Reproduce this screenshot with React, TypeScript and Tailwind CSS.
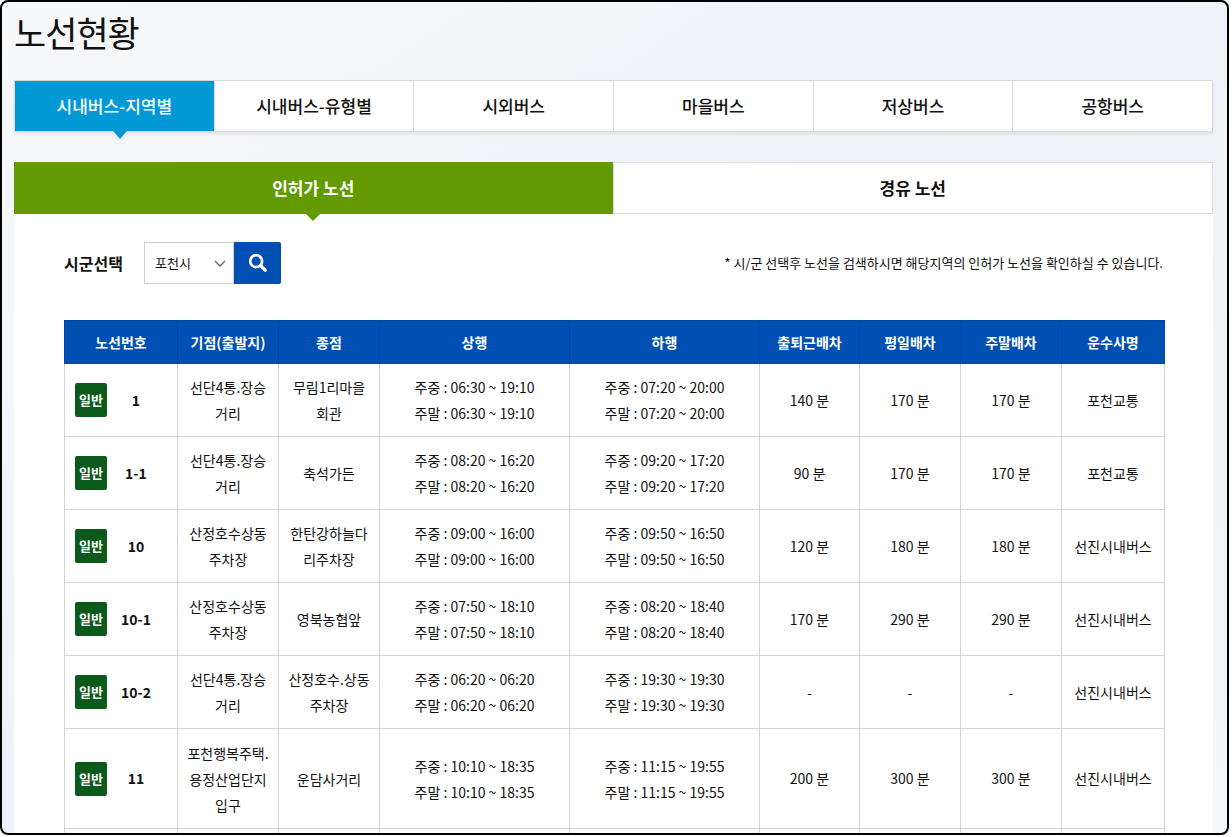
import React from "react";

const rows = [
  { no: "1", from: ["선단4통.장승", "거리"], to: ["무림1리마을", "회관"], up: ["06:30 ~ 19:10", "06:30 ~ 19:10"], down: ["07:20 ~ 20:00", "07:20 ~ 20:00"], a: "140 분", b: "170 분", c: "170 분", co: "포천교통" },
  { no: "1-1", from: ["선단4통.장승", "거리"], to: ["축석가든"], up: ["08:20 ~ 16:20", "08:20 ~ 16:20"], down: ["09:20 ~ 17:20", "09:20 ~ 17:20"], a: "90 분", b: "170 분", c: "170 분", co: "포천교통" },
  { no: "10", from: ["산정호수상동", "주차장"], to: ["한탄강하늘다", "리주차장"], up: ["09:00 ~ 16:00", "09:00 ~ 16:00"], down: ["09:50 ~ 16:50", "09:50 ~ 16:50"], a: "120 분", b: "180 분", c: "180 분", co: "선진시내버스" },
  { no: "10-1", from: ["산정호수상동", "주차장"], to: ["영북농협앞"], up: ["07:50 ~ 18:10", "07:50 ~ 18:10"], down: ["08:20 ~ 18:40", "08:20 ~ 18:40"], a: "170 분", b: "290 분", c: "290 분", co: "선진시내버스" },
  { no: "10-2", from: ["선단4통.장승", "거리"], to: ["산정호수.상동", "주차장"], up: ["06:20 ~ 06:20", "06:20 ~ 06:20"], down: ["19:30 ~ 19:30", "19:30 ~ 19:30"], a: "-", b: "-", c: "-", co: "선진시내버스" },
  { no: "11", from: ["포천행복주택.", "용정산업단지", "입구"], to: ["운담사거리"], up: ["10:10 ~ 18:35", "10:10 ~ 18:35"], down: ["11:15 ~ 19:55", "11:15 ~ 19:55"], a: "200 분", b: "300 분", c: "300 분", co: "선진시내버스" },
];

const widths = [113, 101, 101, 190, 190, 100, 101, 101, 103];
const heads = ["노선번호", "기점(출발지)", "종점", "상행", "하행", "출퇴근배차", "평일배차", "주말배차", "운수사명"];

export default function App() {
  const font = { fontFamily: '"Noto Sans CJK KR", "Noto Sans", sans-serif' };
  return (
    <div className="w-[1232px] h-[837px] bg-white overflow-hidden" style={font}>
      <div className="w-[1229px] h-[835px] border-2 border-black rounded-[8px] overflow-hidden bg-gradient-to-br from-[#f7f8fa] via-[#eef2f8] to-[#f4f6f9] flex flex-col pl-[12px] pr-[14px]">
        <h1 className="shrink-0 text-[35px] leading-none mt-[8px] h-[70px] pt-[4px] text-[#111] tracking-[-1px]">노선현황</h1>
        <div className="shrink-0 flex h-[52px] bg-white border border-[#d8d8d8] shadow-[0_2px_3px_rgba(0,0,0,0.08)]">
          {["시내버스-지역별", "시내버스-유형별", "시외버스", "마을버스", "저상버스", "공항버스"].map((t, i) => (
            <div key={t} className={`relative flex-1 flex items-center justify-center text-[17px] font-medium ${i === 0 ? "bg-[#0099d6] text-white" : "text-[#111] border-l border-[#dcdcdc]"}`}>
              {t}
              {i === 0 && <div className="absolute left-[98px] -bottom-[8px] w-0 h-0 border-l-[7px] border-r-[7px] border-t-[8px] border-l-transparent border-r-transparent border-t-[#0099d6]" />}
            </div>
          ))}
        </div>
        <div className="shrink-0 flex h-[52px] mt-[30px]">
          <div className="relative flex-1 flex items-center justify-center bg-[#629a00] text-white text-[17px] font-bold">
            인허가 노선
            <div className="absolute left-1/2 -translate-x-1/2 -bottom-[7px] w-0 h-0 border-l-[7px] border-r-[7px] border-t-[7px] border-l-transparent border-r-transparent border-t-[#629a00]" />
          </div>
          <div className="flex-1 flex items-center justify-center bg-white text-[#111] text-[17px] font-bold border border-[#dcdcdc]">경유 노선</div>
        </div>
        <div className="flex-1 bg-white px-[50px] pt-[28px]">
          <div className="flex items-center h-[42px]">
            <span className="text-[16px] font-bold text-[#111] w-[80px]">시군선택</span>
            <div className="w-[90px] h-[42px] border border-[#cfcfcf] flex items-center justify-between pl-[10px] pr-[6px] text-[13px] text-[#111]">
              포천시
              <svg width="14" height="14" viewBox="0 0 14 14"><path d="M2 5l5 5 5-5" fill="none" stroke="#666" strokeWidth="1.4" /></svg>
            </div>
            <div className="w-[47px] h-[42px] bg-[#0050b3] rounded-r-[2px] flex items-center justify-center">
              <svg width="22" height="22" viewBox="0 0 24 24"><circle cx="10" cy="10" r="6.5" fill="none" stroke="white" strokeWidth="3" /><path d="M15 15l5 5" stroke="white" strokeWidth="3.5" strokeLinecap="round" /></svg>
            </div>
            <span className="ml-auto text-[13px] text-[#111]">* 시/군 선택후 노선을 검색하시면 해당지역의 인허가 노선을 확인하실 수 있습니다.</span>
          </div>
          <table className="mt-[36px] border-collapse text-[14px] text-[#111] table-fixed" style={{ width: 1100 }}>
            <colgroup>{widths.map((w, i) => <col key={i} style={{ width: w }} />)}</colgroup>
            <thead>
              <tr className="h-[43px] bg-[#0050b3] text-white">
                {heads.map((h) => <th key={h} className="font-bold text-[14px] border border-[#0046a0]">{h}</th>)}
              </tr>
            </thead>
            <tbody>
              {rows.map((r) => (
                <tr key={r.no} className={r.from.length === 3 ? "h-[100px]" : "h-[73px]"}>
                  <td className="border border-[#d4d4d4]">
                    <div className="flex items-center pl-[10px]">
                      <span className="bg-[#0b5a1b] text-white text-[13px] font-bold rounded-[2px] px-[4px] h-[34px] flex items-center">일반</span>
                      <span className="flex-1 text-center font-bold pr-[12px]">{r.no}</span>
                    </div>
                  </td>
                  <td className="border border-[#d4d4d4] text-center leading-[26px]">{r.from.map((x) => <div key={x}>{x}</div>)}</td>
                  <td className="border border-[#d4d4d4] text-center leading-[26px]">{r.to.map((x) => <div key={x}>{x}</div>)}</td>
                  <td className="border border-[#d4d4d4] text-center leading-[26px]"><div>주중 : {r.up[0]}</div><div>주말 : {r.up[1]}</div></td>
                  <td className="border border-[#d4d4d4] text-center leading-[26px]"><div>주중 : {r.down[0]}</div><div>주말 : {r.down[1]}</div></td>
                  <td className="border border-[#d4d4d4] text-center">{r.a}</td>
                  <td className="border border-[#d4d4d4] text-center">{r.b}</td>
                  <td className="border border-[#d4d4d4] text-center">{r.c}</td>
                  <td className="border border-[#d4d4d4] text-center">{r.co}</td>
                </tr>
              ))}
              <tr className="h-[40px]">{widths.map((_, i) => <td key={i} className="border border-[#d4d4d4]" />)}</tr>
            </tbody>
          </table>
        </div>
      </div>
    </div>
  );
}
